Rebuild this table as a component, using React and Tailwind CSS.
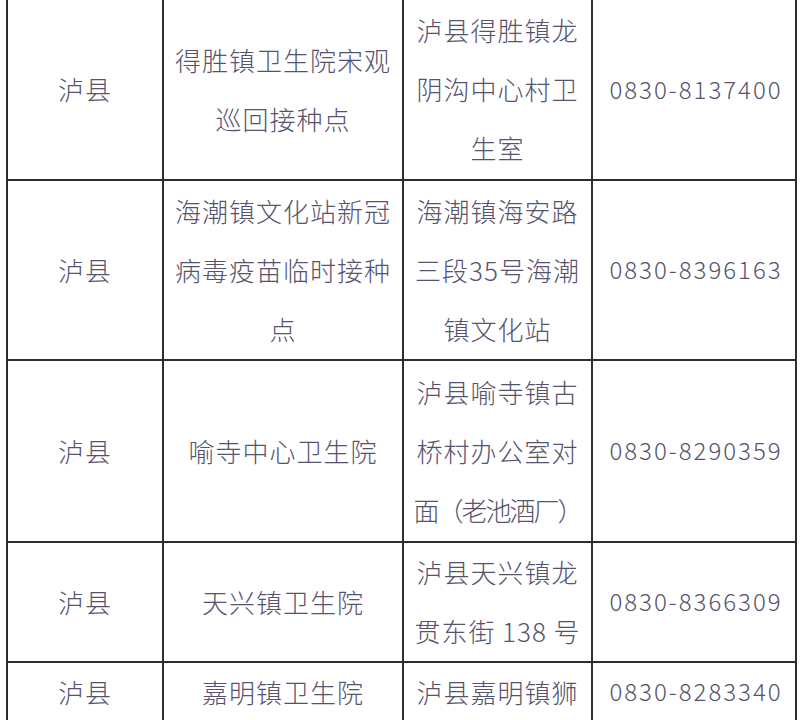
import React from 'react';

const rows = [
  {
    h: 'h-[181px]',
    county: '泸县',
    site: ['得胜镇卫生院宋观', '巡回接种点'],
    addr: ['泸县得胜镇龙', '阴沟中心村卫', '生室'],
    phone: '0830-8137400',
  },
  {
    h: 'h-[180px]',
    county: '泸县',
    site: ['海潮镇文化站新冠', '病毒疫苗临时接种', '点'],
    addr: ['海潮镇海安路', '三段35号海潮', '镇文化站'],
    phone: '0830-8396163',
  },
  {
    h: 'h-[182px]',
    county: '泸县',
    site: ['喻寺中心卫生院'],
    addr: ['泸县喻寺镇古', '桥村办公室对', <span className="tracking-[-2px]">面（老池酒厂）</span>],
    phone: '0830-8290359',
  },
  {
    h: 'h-[120px]',
    county: '泸县',
    site: ['天兴镇卫生院'],
    addr: ['泸县天兴镇龙', '贯东街 138 号'],
    phone: '0830-8366309',
  },
  {
    h: 'h-[60px]',
    county: '泸县',
    site: ['嘉明镇卫生院'],
    addr: ['泸县嘉明镇狮'],
    phone: '0830-8283340',
  },
];

const cjk = "font-['Noto_Sans_CJK_SC',sans-serif] font-light text-[26px] tracking-[1px] -mt-[2px]";

const Cell = ({ children, last }) => (
  <div
    className={`flex flex-col justify-center items-center text-center border-b-2 ${last ? '' : 'border-r-2'} border-[#2e2e2e] overflow-hidden`}
  >
    {children}
  </div>
);

const Lines = ({ lines }) =>
  lines.map((l, i) => (
    <div key={i} className="whitespace-nowrap leading-[59px]">
      {l}
    </div>
  ));

export default function App() {
  return (
    <div className="w-[800px] h-[720px] bg-white overflow-hidden text-[#55536e]">
      <div className="ml-[6px] w-[791px] border-l-2 border-r-2 border-[#2e2e2e]">
        {rows.map((r, i) => (
          <div key={i} className={`grid grid-cols-[156px_240px_189px_202px] ${r.h}`}>
            <Cell>
              <div className={cjk}>
                <Lines lines={[r.county]} />
              </div>
            </Cell>
            <Cell>
              <div className={cjk}>
                <Lines lines={r.site} />
              </div>
            </Cell>
            <Cell>
              <div className={cjk}>
                <Lines lines={r.addr} />
              </div>
            </Cell>
            <Cell last>
              <div className="font-['Noto_Sans_CJK_SC',sans-serif] font-light text-[24px] tracking-[2px] leading-[59px] pl-[4px] -mt-[3px] tabular-nums">
                {r.phone}
              </div>
            </Cell>
          </div>
        ))}
      </div>
    </div>
  );
}
